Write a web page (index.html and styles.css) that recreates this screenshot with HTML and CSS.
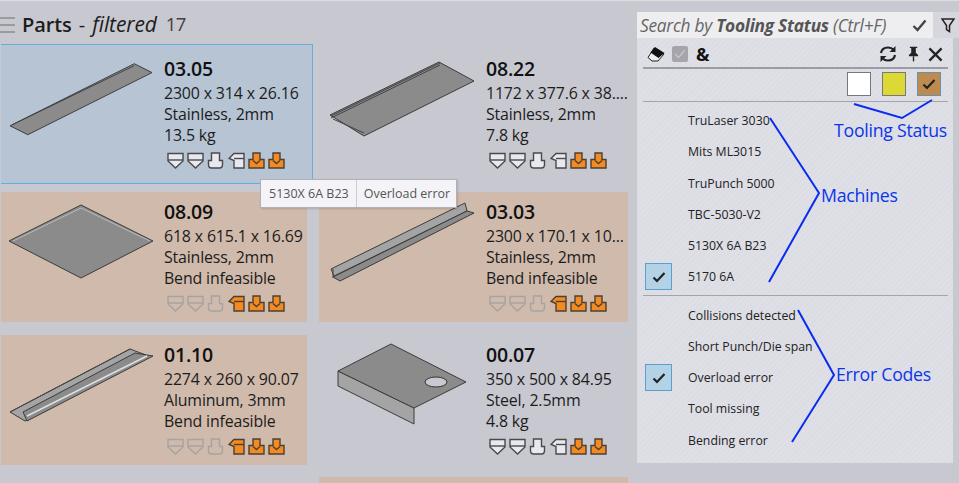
FILE: index.html
```html
<!DOCTYPE html>
<html lang="en">
<head>
<meta charset="utf-8">
<title>Parts</title>
<link rel="stylesheet" href="styles.css">
</head>
<body>
<svg class="defs" width="0" height="0">
  <symbol id="i-die" viewBox="0 0 17 17"><path d="M1 1.500H16V9L8.500 16L1 9Z"/><path class="in" d="M1 8H16"/></symbol>
  <symbol id="i-punch" viewBox="0 0 17 17"><path d="M4.500 1H12.500V8.500H15.500V12.500Q15.500 16 12.500 16H4.500Q1.500 16 1.500 12.500V8.500H4.500Z"/></symbol>
  <symbol id="i-hold" viewBox="0 0 17 17"><path d="M16 1.500H6L1 6.500L6 8.500V16H16Z"/><path class="in" d="M6 6.500H16"/></symbol>
  <symbol id="i-drop" viewBox="0 0 17 17"><path d="M5 1H12V7.500H16V16H1V7.500H5Z"/><path class="in" d="M5 8.500L8.500 11.500L12 8.500"/></symbol>
</svg>
<div class="app">
  <main class="parts">
    <header class="parts-head">
      <svg class="menu" width="15" height="18" viewBox="0 0 15 18"><path d="M0 2H15M0 9H15M0 16H15"/></svg>
      <h1 class="parts-title">Parts <span class="dash">-</span> <em>filtered</em></h1>
      <span class="parts-count">17</span>
    </header>
    <div class="grid">
      <article class="card selected">
        <svg class="thumb" viewBox="1 44 163 140"><polygon class="metal" points="9,126 135,63 153,72 27,135"/><path class="edge" d="M11,125 135,65"/></svg>
        <div class="info">
          <h2>03.05</h2><p>2300 x 314 x 26.16</p><p>Stainless, 2mm</p><p>13.5 kg</p>
          <div class="tools"><svg class="t"><use href="#i-die"/></svg><svg class="t"><use href="#i-die"/></svg><svg class="t"><use href="#i-punch"/></svg><svg class="t"><use href="#i-hold"/></svg><svg class="t on"><use href="#i-drop"/></svg><svg class="t on"><use href="#i-drop"/></svg></div>
        </div>
      </article>
      <article class="card right top">
        <svg class="thumb" viewBox="319 44 167 140"><polygon class="metal" points="330,115 439,62 474,81 364,136"/><path class="edge" d="M331,118 440,65M331,116 440,63M333,119 364,133"/></svg>
        <div class="info">
          <h2>08.22</h2><p>1172 x 377.6 x 38....</p><p>Stainless, 2mm</p><p>7.8 kg</p>
          <div class="tools"><svg class="t"><use href="#i-die"/></svg><svg class="t"><use href="#i-die"/></svg><svg class="t"><use href="#i-punch"/></svg><svg class="t"><use href="#i-hold"/></svg><svg class="t on"><use href="#i-drop"/></svg><svg class="t on"><use href="#i-drop"/></svg></div>
        </div>
      </article>
      <article class="card warn">
        <svg class="thumb" viewBox="1 192 163 130"><polygon class="metal" points="9,241 81,205 153,241 81,278"/><path class="edge light" d="M13,241 81,208 150,241"/></svg>
        <div class="info">
          <h2>08.09</h2><p>618 x 615.1 x 16.69</p><p>Stainless, 2mm</p><p>Bend infeasible</p>
          <div class="tools"><svg class="t off"><use href="#i-die"/></svg><svg class="t off"><use href="#i-die"/></svg><svg class="t off"><use href="#i-punch"/></svg><svg class="t on"><use href="#i-hold"/></svg><svg class="t on"><use href="#i-drop"/></svg><svg class="t on"><use href="#i-drop"/></svg></div>
        </div>
      </article>
      <article class="card warn right">
        <svg class="thumb" viewBox="319 192 167 130"><polygon class="metal pale" points="331,269 465,203 467,211 334,276"/><polygon class="metal" points="333,277 467,211 474,213 340,281"/><path class="edge" d="M333,269 333,278"/></svg>
        <div class="info">
          <h2>03.03</h2><p>2300 x 170.1 x 10...</p><p>Stainless, 2mm</p><p>Bend infeasible</p>
          <div class="tools"><svg class="t off"><use href="#i-die"/></svg><svg class="t off"><use href="#i-die"/></svg><svg class="t off"><use href="#i-punch"/></svg><svg class="t on"><use href="#i-hold"/></svg><svg class="t on"><use href="#i-drop"/></svg><svg class="t on"><use href="#i-drop"/></svg></div>
        </div>
      </article>
      <article class="card warn">
        <svg class="thumb" viewBox="1 335 163 130"><polygon class="metal pale" points="10,412 130,349 146,355 25,421"/><polygon class="metal" points="23,412 135,353 153,356 27,421"/><path class="edge" d="M10,412 130,349"/><path class="edge white" d="M27,416 147,356"/></svg>
        <div class="info">
          <h2>01.10</h2><p>2274 x 260 x 90.07</p><p>Aluminum, 3mm</p><p>Bend infeasible</p>
          <div class="tools"><svg class="t off"><use href="#i-die"/></svg><svg class="t off"><use href="#i-die"/></svg><svg class="t off"><use href="#i-punch"/></svg><svg class="t on"><use href="#i-hold"/></svg><svg class="t on"><use href="#i-drop"/></svg><svg class="t on"><use href="#i-drop"/></svg></div>
        </div>
      </article>
      <article class="card right">
        <svg class="thumb" viewBox="319 335 167 130"><polygon class="metal pale" points="338,371 414,408 414,424 338,386"/><polygon class="metal" points="338,371 391,344 466,382 414,408"/><ellipse class="hole" cx="436" cy="382" rx="11" ry="5"/></svg>
        <div class="info">
          <h2>00.07</h2><p>350 x 500 x 84.95</p><p>Steel, 2.5mm</p><p>4.8 kg</p>
          <div class="tools"><svg class="t"><use href="#i-die"/></svg><svg class="t"><use href="#i-die"/></svg><svg class="t"><use href="#i-punch"/></svg><svg class="t"><use href="#i-hold"/></svg><svg class="t on"><use href="#i-drop"/></svg><svg class="t on"><use href="#i-drop"/></svg></div>
        </div>
      </article>
      <div class="card blank"></div>
      <div class="card warn right"></div>
    </div>
  </main>
  <aside class="side">
    <div class="search">
      <div class="search-box">
        <span class="search-text">Search by <b>Tooling Status</b> (Ctrl+F)</span>
        <svg class="search-check" width="15" height="13" viewBox="0 0 15 13"><path d="M1.500 7L5.500 11L13.500 1.500"/></svg>
      </div>
      <div class="filter-btn"><svg width="14" height="15" viewBox="0 0 14 15"><path d="M1 1H13L8.500 7.500V13.500L5.500 11.500V7.500Z"/></svg></div>
    </div>
    <div class="panel">
      <div class="toolbar">
        <svg class="ic" width="18" height="17" viewBox="0 0 18 17"><path class="eraser-b" d="M7 2L17 8L11 15H5L1 11.500Z"/><path class="eraser-t" d="M8 1L17.500 7L11.500 12L3.500 6.500Z"/></svg>
        <span class="mini-check"><svg width="12" height="10" viewBox="0 0 12 10"><path d="M1 5L4.500 8.500L11 1"/></svg></span>
        <span class="amp">&amp;</span>
        <span class="spacer"></span>
        <svg class="ic sync" width="18" height="18" viewBox="0 0 18 18"><path d="M2 8Q3 2.500 9 2.500Q12.500 2.500 15 5M16 10Q15 15.500 9 15.500Q5.500 15.500 3 13"/><path class="arrow" d="M16.500 1V7H10.500ZM1.500 17V11H7.500Z"/></svg>
        <svg class="ic pin" width="11" height="18" viewBox="0 0 12 18"><path d="M2 1H10V2.500H8.500V7.500L11 10V11.500H1V10L3.500 7.500V2.500H2Z"/><path class="pin-needle" d="M6 11.500V17"/></svg>
        <svg class="ic close" width="15" height="15" viewBox="0 0 16 16"><path d="M1.500 1.500L14.500 14.500M14.500 1.500L1.500 14.500"/></svg>
      </div>
      <div class="swatches">
        <span class="swatch white"></span>
        <span class="swatch yellow"></span>
        <span class="swatch brown"><svg width="14" height="12" viewBox="0 0 14 12"><path d="M1.500 6.500L5 10L12.500 2"/></svg></span>
      </div>
      <ul class="list first">
        <li><span class="box"></span>TruLaser 3030</li>
        <li><span class="box"></span>Mits ML3015</li>
        <li><span class="box"></span>TruPunch 5000</li>
        <li><span class="box"></span>TBC-5030-V2</li>
        <li><span class="box"></span>5130X 6A B23</li>
        <li><span class="box checked"><svg width="14" height="12" viewBox="0 0 14 12"><path d="M1.500 6.500L5 10L12.500 2"/></svg></span>5170 6A</li>
      </ul>
      <ul class="list">
        <li><span class="box"></span>Collisions detected</li>
        <li><span class="box"></span>Short Punch/Die span</li>
        <li><span class="box checked"><svg width="14" height="12" viewBox="0 0 14 12"><path d="M1.500 6.500L5 10L12.500 2"/></svg></span>Overload error</li>
        <li><span class="box"></span>Tool missing</li>
        <li><span class="box"></span>Bending error</li>
      </ul>
    </div>
  </aside>
</div>
<div class="tooltip"><span class="tip-a">5130X 6A B23</span><span class="tip-b">Overload error</span></div>
<svg class="notes" width="959" height="483" viewBox="0 0 959 483">
  <path d="M854 104L902 118L932 100M770 118L819 193L769 282M798 310L834 375L792 442"/>
</svg>
<span class="note n-tool">Tooling Status</span>
<span class="note n-mach">Machines</span>
<span class="note n-err">Error Codes</span>
</body>
</html>
```
FILE: styles.css
```css
* { box-sizing: border-box; }
html, body { margin: 0; padding: 0; }
body {
  position: relative;
  width: 959px;
  height: 483px;
  overflow: hidden;
  background: #c8c8d1;
  border-top: 1px solid #dcdce2;
  font-family: "Open Sans", "Noto Sans", sans-serif;
  color: #1c1c1c;
}
.defs { position: absolute; }
.app { display: flex; height: 482px; overflow: hidden; }

/* parts column */
.parts { width: 637px; height: 482px; overflow: hidden; flex: none; padding-left: 1px; }
.parts-head { display: flex; align-items: center; height: 43px; padding-top: 2px; margin-left: -1px; }
.menu { flex: none; margin: 3px 7px 0 0; }
.menu path { stroke: #9a9aa0; stroke-width: 2; fill: none; }
.parts-title { margin: 0; font-size: 20px; font-weight: 600; white-space: nowrap; letter-spacing: -.1px; }
.parts-title em { font-weight: 400; font-size: 21px; }
.parts-title .dash { font-weight: 400; margin: 0 2px; }
.parts-count { margin-left: 9px; font-size: 18.500px; color: #44403a; letter-spacing: -.6px; }

.grid {
  display: grid;
  grid-template-columns: 312px 309px;
  grid-template-rows: 148px 143px 142px 142px;
  column-gap: 6px;
}
.card { display: flex; align-items: flex-start; height: 130px; }
.card.warn { background: #d0baab; margin-right: 6px; }
.card.warn.right { margin-right: 0; }
.card.selected, .card.top { height: 140px; }
.card.selected { background: #b6c4d4; border: 1px solid #62aee0; border-left: 0; }
.thumb { flex: none; width: 163px; height: 100%; }
.right .thumb { width: 167px; }
.info { padding-top: 7px; min-width: 0; }
.top .info { padding-top: 12px; }
.selected .info { padding-top: 11px; }
.info h2 { margin: 0; font-size: 19.500px; line-height: 26px; padding-bottom: 1px; font-weight: 600; letter-spacing: -.2px; color: #111; }
.info p { margin: 0; font-size: 15.900px; line-height: 21px; white-space: nowrap; letter-spacing: -.15px; }
.tools { display: flex; gap: 3.200px; margin: 6px 0 0 3px; }
.t { width: 17px; height: 17px; flex: none; fill: #e8e8f0; stroke: #4a4a4a; stroke-width: 1.400; }
.t .in { fill: none; }
.t.on { fill: #f58a20; stroke: #4a4036; }
.t.off { fill: none; stroke: #a5a3a3; }

/* part drawings */
.metal { fill: #8b8b8b; stroke: #3c3c3c; stroke-width: 1; stroke-linejoin: round; }
.metal.pale { fill: #a4a4a4; }
.edge { fill: none; stroke: #444; stroke-width: 1; }
.edge.light { stroke: #bbb; }
.edge.white { stroke: #e0e0e0; stroke-width: 1.500; }
.hole { fill: #c9c9d2; stroke: #333; stroke-width: 1; }

/* search + panel */
.side { width: 322px; flex: none; padding-top: 11px; }
.search { display: flex; height: 26px; width: 322px; }
.search-box {
  flex: none;
  width: 296px;
  display: flex;
  align-items: center;
  justify-content: space-between;
  padding: 0 6px 0 3px;
  background: #eeeef0;
}
.search-text { font-size: 17.300px; font-style: italic; color: #666; white-space: nowrap; letter-spacing: -.25px; }
.search-text b { color: #555; }
.search-check path { fill: none; stroke: #444; stroke-width: 2.400; }
.filter-btn { flex: 1; display: flex; align-items: center; justify-content: flex-end; padding-right: 4px; background: #d6d6dc; }
.filter-btn path { fill: none; stroke: #222; stroke-width: 1.500; }
.panel {
  width: 316px;
  height: 425px;
  padding: 0 5px 0 6px;
  background: repeating-linear-gradient(135deg, #dcdce4 0 2px, #dfdfe6 2px 4px);
}
.toolbar { display: flex; align-items: center; height: 31px; padding: 3px 5px 0 4px; border-bottom: 2px solid #9c9ca4; }
.ic { flex: none; }
.eraser-b { fill: #eee; stroke: #222; stroke-width: 1; }
.eraser-t { fill: #111; }
.mini-check { display: flex; align-items: center; justify-content: center; width: 16px; height: 16px; margin-left: 7px; background: #a5a5ab; border-radius: 2px; }
.mini-check path { fill: none; stroke: #c8c8cc; stroke-width: 1.200; }
.amp { margin-left: 8px; font-size: 18px; line-height: 18px; font-weight: 700; color: #111; }
.spacer { flex: 1; }
.sync path { fill: none; stroke: #222; stroke-width: 2.200; }
.sync .arrow { fill: #222; stroke: none; }
.pin { margin-left: 11px; }
.pin path { fill: #222; }
.pin .pin-needle { fill: none; stroke: #222; stroke-width: 1.500; }
.close { margin-left: 9px; }
.close path { fill: none; stroke: #222; stroke-width: 2.400; }
.swatches { display: flex; justify-content: flex-end; gap: 11px; height: 33px; padding: 3px 7px 0 0; border-bottom: 1px solid #a4a4aa; }
.swatch { display: flex; align-items: center; justify-content: center; width: 24px; height: 24px; border: 1px solid #77777f; }
.swatch.white { background: #fff; }
.swatch.yellow { background: #dcd835; }
.swatch.brown { background: #bd8a50; border-color: #6c90a8; }
.swatch path, .box path { fill: none; stroke: #222; stroke-width: 2.200; }
.list { margin: 0; padding: 3.500px 0; list-style: none; font-size: 12.300px; color: #222; }
.list.first { border-bottom: 1px solid #a4a4aa; height: 194px; padding-top: 3px; }
.list li { display: flex; align-items: center; height: 31.250px; white-space: nowrap; }
.box { display: flex; align-items: center; justify-content: center; flex: none; width: 27px; height: 27px; margin: 0 16px 0 2px; }
.box.checked { background: #b4d2e6; border: 1px solid #5aa0cc; }

/* overlays */
.tooltip {
  position: absolute;
  left: 260px;
  top: 178px;
  display: flex;
  align-items: center;
  height: 29px;
  width: 197px;
  background: #f4f4f8;
  border: 1px solid #b0b0b6;
  box-shadow: 1px 1px 2px rgba(0,0,0,.15);
  font-size: 12.500px;
  color: #555;
  white-space: nowrap;
}
.tip-a { padding: 0 7px 0 8px; height: 100%; display: flex; align-items: center; border-right: 1px solid #ccc; }
.tip-b { padding-left: 7px; }
.notes { position: absolute; left: 0; top: -1px; pointer-events: none; }
.notes path { fill: none; stroke: #0a2cf0; stroke-width: 2; }
.note { position: absolute; font-size: 17.700px; color: #0a36ea; white-space: nowrap; letter-spacing: -.25px; }
.n-tool { left: 834px; top: 117px; }
.n-mach { left: 821px; top: 182px; }
.n-err { left: 836px; top: 361px; }
```
